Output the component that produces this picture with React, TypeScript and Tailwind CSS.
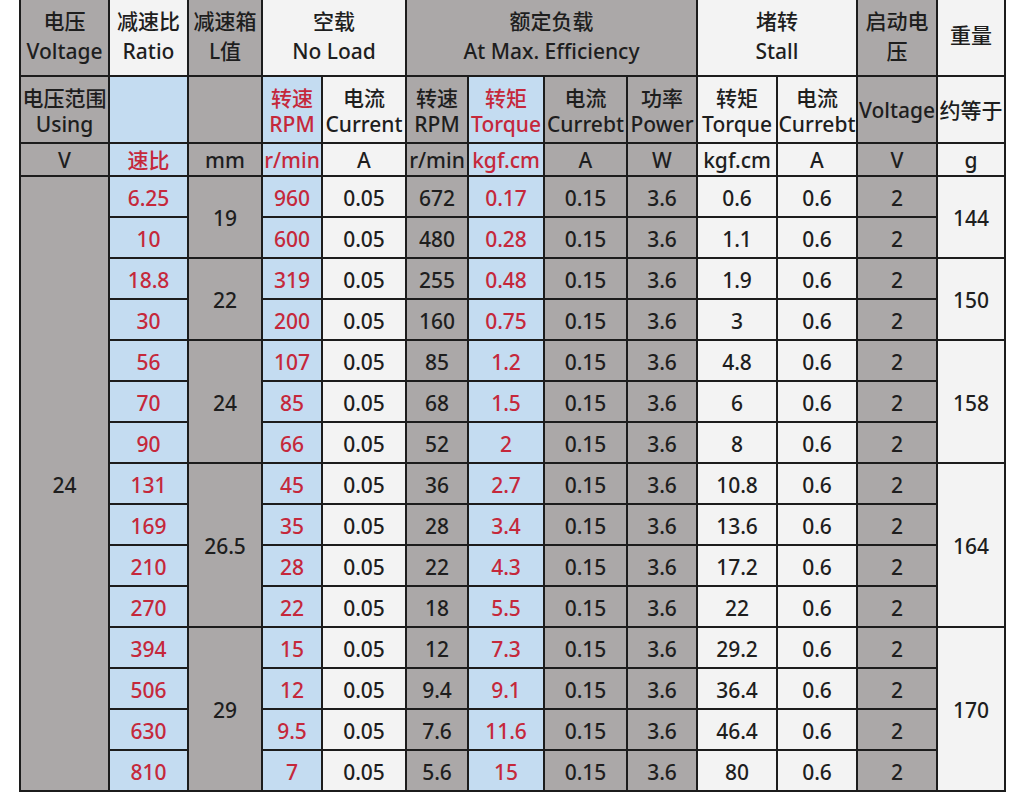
import React from "react";

const GRAY = "bg-[#aba8a8]";
const BLUE = "bg-[#c4dcf1]";
const WHITE = "bg-[#f3f3f3]";

const ratio = ["6.25", "10", "18.8", "30", "56", "70", "90", "131", "169", "210", "270", "394", "506", "630", "810"];
const nlRpm = ["960", "600", "319", "200", "107", "85", "66", "45", "35", "28", "22", "15", "12", "9.5", "7"];
const rRpm = ["672", "480", "255", "160", "85", "68", "52", "36", "28", "22", "18", "12", "9.4", "7.6", "5.6"];
const torque = ["0.17", "0.28", "0.48", "0.75", "1.2", "1.5", "2", "2.7", "3.4", "4.3", "5.5", "7.3", "9.1", "11.6", "15"];
const stall = ["0.6", "1.1", "1.9", "3", "4.8", "6", "8", "10.8", "13.6", "17.2", "22", "29.2", "36.4", "46.4", "80"];

const lGroups: Record<number, [string, number]> = { 0: ["19", 2], 2: ["22", 2], 4: ["24", 3], 7: ["26.5", 4], 11: ["29", 4] };
const wGroups: Record<number, [string, number]> = { 0: ["144", 2], 2: ["150", 2], 4: ["158", 3], 7: ["164", 4], 11: ["170", 4] };
const span: Record<number, string> = { 2: "row-span-2", 3: "row-span-3", 4: "row-span-4" };

function Cell({ bg, red, className = "", children }: { bg: string; red?: boolean; className?: string; children?: React.ReactNode }) {
  return (
    <div
      className={`${bg} ${red ? "text-[#c5283b]" : "text-[#1e1e1e]"} flex flex-col items-center justify-center text-center whitespace-nowrap ${className}`}
    >
      {children}
    </div>
  );
}

export default function App() {
  const rows: React.ReactNode[] = [];
  const d = "pt-[4px]";
  for (let i = 0; i < 15; i++) {
    if (i === 0)
      rows.push(
        <Cell key="v" bg={GRAY} className={`row-span-15 ${d}`}>
          24
        </Cell>
      );
    rows.push(<Cell key={`r${i}`} bg={BLUE} red className={d}>{ratio[i]}</Cell>);
    if (lGroups[i])
      rows.push(
        <Cell key={`l${i}`} bg={GRAY} className={`${span[lGroups[i][1]]} ${d}`}>
          {lGroups[i][0]}
        </Cell>
      );
    rows.push(<Cell key={`n${i}`} bg={BLUE} red className={d}>{nlRpm[i]}</Cell>);
    rows.push(<Cell key={`c${i}`} bg={WHITE} className={d}>0.05</Cell>);
    rows.push(<Cell key={`rr${i}`} bg={GRAY} className={d}>{rRpm[i]}</Cell>);
    rows.push(<Cell key={`t${i}`} bg={BLUE} red className={d}>{torque[i]}</Cell>);
    rows.push(<Cell key={`rc${i}`} bg={GRAY} className={d}>0.15</Cell>);
    rows.push(<Cell key={`p${i}`} bg={GRAY} className={d}>3.6</Cell>);
    rows.push(<Cell key={`s${i}`} bg={WHITE} className={d}>{stall[i]}</Cell>);
    rows.push(<Cell key={`sc${i}`} bg={WHITE} className={d}>0.6</Cell>);
    rows.push(<Cell key={`sv${i}`} bg={GRAY} className={d}>2</Cell>);
    if (wGroups[i])
      rows.push(
        <Cell key={`w${i}`} bg={WHITE} className={`${span[wGroups[i][1]]} ${d}`}>
          {wGroups[i][0]}
        </Cell>
      );
  }

  const h1 = "leading-[30px] pb-[3px]";
  const h2 = "leading-[26px] pt-[2px]";
  const h3 = "pt-[2px]";

  return (
    <div className="min-h-[795px] bg-white font-['Noto_Sans','Noto_Sans_CJK_SC',sans-serif] text-[21px] font-medium">
      <div className="ml-[19px] w-fit grid grid-cols-[87px_77px_72px_58px_82px_60px_74px_81px_68px_78px_78px_78px_66px] grid-rows-[75px_65px_31px_repeat(15,39px)] gap-[2px] bg-[#1c1c1c] px-[2px] pb-[2px]">
        {/* Header row 1 */}
        <Cell bg={GRAY} className={h1}>
          <span>电压</span>
          <span>Voltage</span>
        </Cell>
        <Cell bg={WHITE} className={h1}>
          <span>减速比</span>
          <span>Ratio</span>
        </Cell>
        <Cell bg={GRAY} className={h1}>
          <span>减速箱</span>
          <span>L值</span>
        </Cell>
        <Cell bg={WHITE} className={`col-span-2 ${h1}`}>
          <span>空载</span>
          <span>No Load</span>
        </Cell>
        <Cell bg={GRAY} className={`col-span-4 ${h1}`}>
          <span>额定负载</span>
          <span>At Max. Efficiency</span>
        </Cell>
        <Cell bg={WHITE} className={`col-span-2 ${h1}`}>
          <span>堵转</span>
          <span>Stall</span>
        </Cell>
        <Cell bg={GRAY} className={h1}>
          <span>启动电</span>
          <span>压</span>
        </Cell>
        <Cell bg={WHITE} className="pb-[3px]">重量</Cell>

        {/* Header row 2 */}
        <Cell bg={GRAY} className={h2}>
          <span>电压范围</span>
          <span>Using</span>
        </Cell>
        <Cell bg={BLUE} />
        <Cell bg={GRAY} />
        <Cell bg={BLUE} red className={h2}>
          <span>转速</span>
          <span>RPM</span>
        </Cell>
        <Cell bg={WHITE} className={h2}>
          <span>电流</span>
          <span>Current</span>
        </Cell>
        <Cell bg={GRAY} className={h2}>
          <span>转速</span>
          <span>RPM</span>
        </Cell>
        <Cell bg={BLUE} red className={h2}>
          <span>转矩</span>
          <span>Torque</span>
        </Cell>
        <Cell bg={GRAY} className={h2}>
          <span>电流</span>
          <span>Currebt</span>
        </Cell>
        <Cell bg={GRAY} className={h2}>
          <span>功率</span>
          <span>Power</span>
        </Cell>
        <Cell bg={WHITE} className={h2}>
          <span>转矩</span>
          <span>Torque</span>
        </Cell>
        <Cell bg={WHITE} className={h2}>
          <span>电流</span>
          <span>Currebt</span>
        </Cell>
        <Cell bg={GRAY} className={h3}>Voltage</Cell>
        <Cell bg={WHITE} className={h3}>约等于</Cell>

        {/* Header row 3 */}
        <Cell bg={GRAY} className={h3}>V</Cell>
        <Cell bg={BLUE} red className={h3}>速比</Cell>
        <Cell bg={GRAY} className={h3}>mm</Cell>
        <Cell bg={BLUE} red className={h3}>r/min</Cell>
        <Cell bg={WHITE} className={h3}>A</Cell>
        <Cell bg={GRAY} className={h3}>r/min</Cell>
        <Cell bg={BLUE} red className={h3}>kgf.cm</Cell>
        <Cell bg={GRAY} className={h3}>A</Cell>
        <Cell bg={GRAY} className={h3}>W</Cell>
        <Cell bg={WHITE} className={h3}>kgf.cm</Cell>
        <Cell bg={WHITE} className={h3}>A</Cell>
        <Cell bg={GRAY} className={h3}>V</Cell>
        <Cell bg={WHITE} className={h3}>g</Cell>

        {rows}
      </div>
    </div>
  );
}
